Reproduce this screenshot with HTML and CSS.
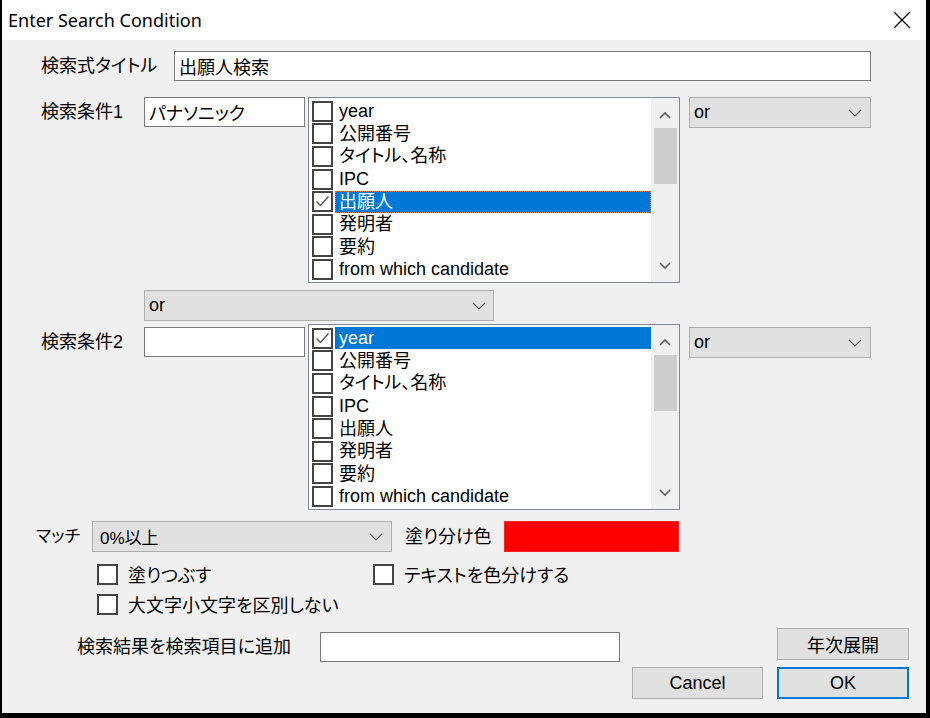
FILE: index.html
```html
<!DOCTYPE html>
<html lang="ja">
<head>
    <meta charset="UTF-8">
    <title>Enter Search Condition</title>
    <link rel="stylesheet" href="styles.css">
</head>
<body>
    <div class="window">
        <div class="titlebar">
            <span class="title">Enter Search Condition</span>
            <span class="close">
                <svg width="18" height="18" viewBox="0 0 18 18"><path d="M1 1L17 17M17 1L1 17" stroke="#000" stroke-width="1.2" fill="none"/></svg>
            </span>
        </div>

        <div class="client">
            <div class="row row-title">
                <span class="lbl lbl-title">検索式タイトル</span>
                <div class="edit edit-title">出願人検索</div>
            </div>

            <!-- condition 1 -->
            <div class="row row-cond">
                <span class="lbl lbl-cond">検索条件1</span>
                <div class="edit edit-cond">パナソニック</div>
                <div class="listbox">
                    <div class="items">
                        <div class="item"><span class="cb"></span><span class="txt">year</span></div>
                        <div class="item"><span class="cb"></span><span class="txt">公開番号</span></div>
                        <div class="item"><span class="cb"></span><span class="txt">タイトル、名称</span></div>
                        <div class="item"><span class="cb"></span><span class="txt">IPC</span></div>
                        <div class="item"><span class="cb"><svg width="17" height="17" viewBox="0 0 17 17"><polyline points="2.5,8.5 6.5,12.5 14.5,3.5" stroke="#555" stroke-width="1.3" fill="none"/></svg></span><span class="txt sel focus">出願人</span></div>
                        <div class="item"><span class="cb"></span><span class="txt">発明者</span></div>
                        <div class="item"><span class="cb"></span><span class="txt">要約</span></div>
                        <div class="item"><span class="cb"></span><span class="txt">from which candidate</span></div>
                    </div>
                    <div class="vscroll">
                        <div class="arrow arrow-up"><svg width="12" height="8" viewBox="0 0 12 8"><polyline points="1,7 6,2 11,7" stroke="#606060" stroke-width="1.6" fill="none"/></svg></div>
                        <div class="thumb"></div>
                        <div class="arrow arrow-down"><svg width="12" height="8" viewBox="0 0 12 8"><polyline points="1,1 6,6 11,1" stroke="#606060" stroke-width="1.6" fill="none"/></svg></div>
                    </div>
                </div>
                <div class="combo combo-op">
                    <span>or</span>
                    <svg width="14" height="8" viewBox="0 0 14 8"><polyline points="1,1 7,7 13,1" stroke="#606060" stroke-width="1.2" fill="none"/></svg>
                </div>
            </div>

            <div class="combo combo-mid">
                <span>or</span>
                <svg width="14" height="8" viewBox="0 0 14 8"><polyline points="1,1 7,7 13,1" stroke="#606060" stroke-width="1.2" fill="none"/></svg>
            </div>

            <!-- condition 2 -->
            <div class="row row-cond row-cond2">
                <span class="lbl lbl-cond">検索条件2</span>
                <div class="edit edit-cond"></div>
                <div class="listbox">
                    <div class="items">
                        <div class="item"><span class="cb"><svg width="17" height="17" viewBox="0 0 17 17"><polyline points="2.5,8.5 6.5,12.5 14.5,3.5" stroke="#555" stroke-width="1.3" fill="none"/></svg></span><span class="txt sel">year</span></div>
                        <div class="item"><span class="cb"></span><span class="txt">公開番号</span></div>
                        <div class="item"><span class="cb"></span><span class="txt">タイトル、名称</span></div>
                        <div class="item"><span class="cb"></span><span class="txt">IPC</span></div>
                        <div class="item"><span class="cb"></span><span class="txt">出願人</span></div>
                        <div class="item"><span class="cb"></span><span class="txt">発明者</span></div>
                        <div class="item"><span class="cb"></span><span class="txt">要約</span></div>
                        <div class="item"><span class="cb"></span><span class="txt">from which candidate</span></div>
                    </div>
                    <div class="vscroll">
                        <div class="arrow arrow-up"><svg width="12" height="8" viewBox="0 0 12 8"><polyline points="1,7 6,2 11,7" stroke="#606060" stroke-width="1.6" fill="none"/></svg></div>
                        <div class="thumb"></div>
                        <div class="arrow arrow-down"><svg width="12" height="8" viewBox="0 0 12 8"><polyline points="1,1 6,6 11,1" stroke="#606060" stroke-width="1.6" fill="none"/></svg></div>
                    </div>
                </div>
                <div class="combo combo-op">
                    <span>or</span>
                    <svg width="14" height="8" viewBox="0 0 14 8"><polyline points="1,1 7,7 13,1" stroke="#606060" stroke-width="1.2" fill="none"/></svg>
                </div>
            </div>

            <div class="row row-match">
                <span class="lbl lbl-match">マッチ</span>
                <div class="combo combo-match">
                    <span>0%以上</span>
                    <svg width="14" height="8" viewBox="0 0 14 8"><polyline points="1,1 7,7 13,1" stroke="#606060" stroke-width="1.2" fill="none"/></svg>
                </div>
                <span class="lbl lbl-color">塗り分け色</span>
                <div class="swatch"></div>
            </div>

            <div class="checks">
                <div class="check-row">
                    <label class="check check-fill"><span class="box"></span>塗りつぶす</label>
                    <label class="check"><span class="box"></span>テキストを色分けする</label>
                </div>
                <div class="check-row">
                    <label class="check"><span class="box"></span>大文字小文字を区別しない</label>
                </div>
            </div>

            <div class="bottom">
                <span class="lbl lbl-add">検索結果を検索項目に追加</span>
                <div class="edit edit-add"></div>
                <div class="btn btn-year">年次展開</div>
                <div class="btn btn-cancel">Cancel</div>
                <div class="btn btn-ok">OK</div>
            </div>
        </div>
    </div>
</body>
</html>
```

FILE: styles.css
```css
body {
    margin: 0;
    background: #000;
    font-family: "Liberation Sans", "Noto Sans CJK JP", sans-serif;
    font-size: 18px;
    color: #000;
    font-feature-settings: "palt";
}

.window {
    margin-left: 2px;
    width: 924px;
    height: 713px;
    background: #f0f0f0;
    display: flex;
    flex-direction: column;
    overflow: hidden;
}

.titlebar {
    height: 40px;
    flex: none;
    background: #fff;
    display: flex;
    align-items: center;
    justify-content: space-between;
    padding-left: 6px;
}

.title {
    font-family: "Noto Sans", sans-serif;
    font-size: 18px;
}

.close {
    width: 46px;
    height: 40px;
    margin-right: 1px;
    display: flex;
    align-items: center;
    justify-content: center;
}

.client {
    flex: 1;
    display: flex;
    flex-direction: column;
    align-items: flex-start;
}

.row {
    display: flex;
    align-items: flex-start;
}

.lbl {
    line-height: 30px;
    white-space: nowrap;
}

.edit {
    box-sizing: border-box;
    height: 30px;
    background: #fff;
    border: 1px solid #7a7a7a;
    padding-left: 4px;
    display: flex;
    align-items: center;
}

/* title row */
.row-title {
    margin-top: 11px;
    margin-left: 39px;
}

.lbl-title { width: 133px; }
.edit-title { width: 697px; }

/* condition rows */
.row-cond {
    margin-top: 16px;
    margin-left: 39px;
}

.row-cond2 { margin-top: 3px; }

.row-cond2 .lbl,
.row-cond2 .edit,
.row-cond2 .combo {
    margin-top: 3px;
}

.lbl-cond { width: 103px; }

.edit-cond { width: 161px; }

.listbox {
    box-sizing: border-box;
    width: 372px;
    height: 186px;
    margin-left: 3px;
    margin-right: 9px;
    background: #fff;
    border: 1px solid #828790;
    display: flex;
}

.items {
    flex: 1;
    padding: 2px 0 0 3px;
}

.item {
    height: 22.6px;
    display: flex;
    align-items: center;
}

.cb {
    box-sizing: border-box;
    width: 21px;
    height: 21px;
    flex: none;
    border: 2px solid #444;
    background: #fff;
    display: flex;
}

.txt {
    flex: 1;
    height: 22px;
    line-height: 22px;
    margin-left: 2px;
    padding-left: 4px;
    white-space: nowrap;
}

.txt.sel {
    background: #0078d7;
    color: #fff;
}

.txt.focus {
    outline: 1px dotted #c8823c;
    outline-offset: -1px;
}

.vscroll {
    width: 28px;
    flex: none;
    background: #f0f0f0;
    display: flex;
    flex-direction: column;
    align-items: center;
}

.arrow {
    width: 100%;
    height: 30px;
    display: flex;
    justify-content: center;
}

.arrow-up {
    align-items: center;
    padding-top: 4px;
    box-sizing: border-box;
}

.arrow-down {
    margin-top: auto;
    align-items: center;
    padding-bottom: 3px;
    box-sizing: border-box;
}

.thumb {
    width: 23px;
    height: 56px;
    background: #cdcdcd;
}

/* combo boxes */
.combo {
    box-sizing: border-box;
    height: 31px;
    background: #e1e1e1;
    border: 1px solid #adadad;
    display: flex;
    align-items: center;
    justify-content: space-between;
    padding: 0 8px 0 4px;
}

.combo-op { width: 182px; }

.combo-mid {
    width: 350px;
    margin-top: 7px;
    margin-left: 142px;
    padding-right: 7px;
}

/* match row */
.row-match {
    margin-top: 11px;
    margin-left: 34px;
    align-items: center;
}

.lbl-match {
    width: 56px;
    font-size: 17px;
}

.combo-match {
    width: 300px;
    padding-left: 7px;
    font-size: 17px;
}

.lbl-color {
    width: 99px;
    margin-left: 13px;
}

.swatch {
    box-sizing: border-box;
    width: 175px;
    height: 31px;
    background: #ff0000;
    border: 1px solid #f22;
}

/* checkboxes */
.checks {
    margin-top: 12px;
    margin-left: 95px;
    display: flex;
    flex-direction: column;
    gap: 10px;
}

.check-row {
    display: flex;
}

.check {
    display: flex;
    align-items: center;
    height: 20px;
    gap: 10px;
    white-space: nowrap;
}

.check-fill { width: 276px; }

.box {
    box-sizing: border-box;
    width: 21px;
    height: 21px;
    border: 2px solid #444;
    background: #fff;
}

/* bottom area */
.bottom {
    margin-top: 14px;
    margin-left: 75px;
    display: grid;
    grid-template-columns: 243px 300px 12px 131px 14px 132px;
    grid-template-rows: 32px 32px;
    row-gap: 7px;
}

.lbl-add {
    grid-column: 1;
    grid-row: 1;
    margin-top: 4px;
}

.edit-add {
    grid-column: 2;
    grid-row: 1;
    margin-top: 4px;
}

.btn {
    box-sizing: border-box;
    background: #e1e1e1;
    border: 1px solid #adadad;
    display: flex;
    align-items: center;
    justify-content: center;
}

.btn-year {
    grid-column: 6;
    grid-row: 1;
}

.btn-cancel {
    grid-column: 4;
    grid-row: 2;
}

.btn-ok {
    grid-column: 6;
    grid-row: 2;
    border: 2px solid #0078d7;
}
```
